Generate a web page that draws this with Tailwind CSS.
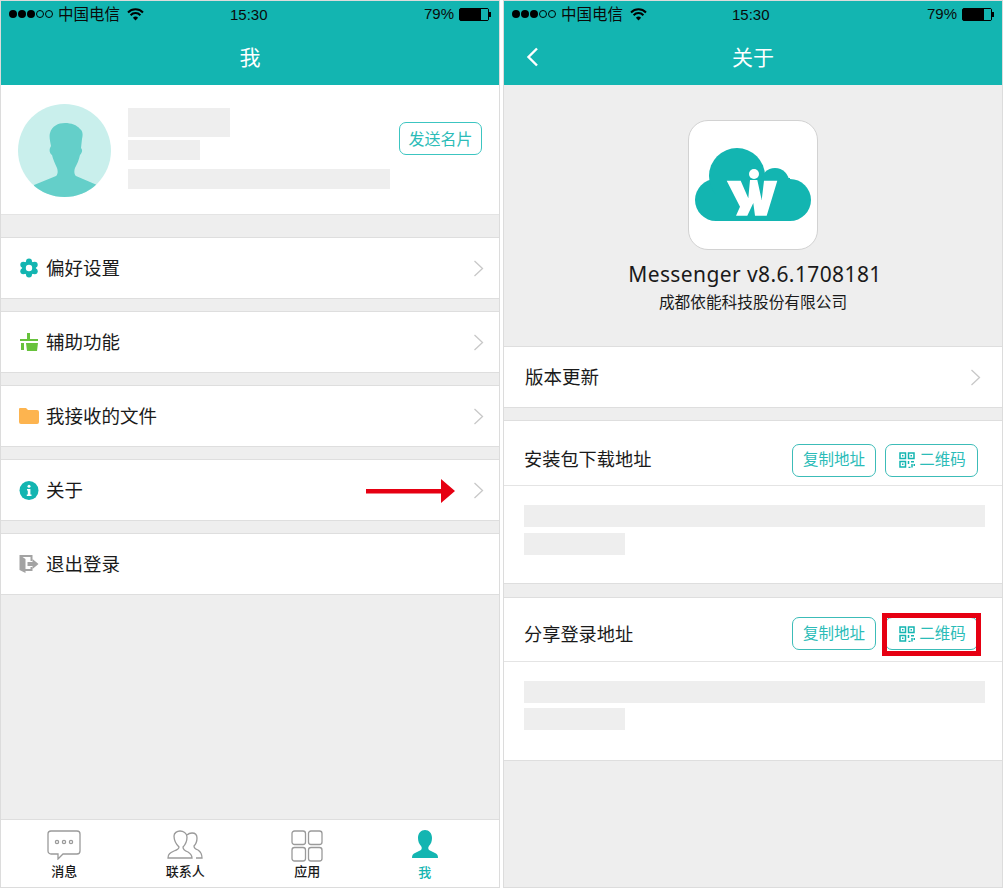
<!DOCTYPE html>
<html lang="zh-CN">
<head>
    <meta charset="UTF-8">
    <meta name="viewport" content="width=device-width, initial-scale=1.0">
    <title>Messenger</title>
    <script src="https://cdn.jsdelivr.net/npm/@tailwindcss/browser@4"></script>
</head>
<body class="bg-white font-['Noto_Sans','Noto_Sans_CJK_SC',sans-serif] text-[#1a1a1a]">
<div class="flex w-[1003px] h-[888px] overflow-hidden">

    <!-- left phone: me -->
    <div class="relative flex flex-col w-[500px] h-[888px] border border-[#dcdcdc] bg-[#eeeeee]">
        <div class="h-[84px] shrink-0 bg-[#13b5b1]">
            <div class="relative flex items-center h-[26px] pl-[8px] pr-[8px] font-['Liberation_Sans','Noto_Sans_CJK_SC',sans-serif] text-[15px] text-[#0a0a0a]">
                <div class="flex items-center gap-[1px]">
                    <span class="w-[8px] h-[8px] rounded-full bg-black"></span>
                    <span class="w-[8px] h-[8px] rounded-full bg-black"></span>
                    <span class="w-[8px] h-[8px] rounded-full bg-black"></span>
                    <span class="w-[8px] h-[8px] rounded-full border border-black"></span>
                    <span class="w-[8px] h-[8px] rounded-full border border-black"></span>
                </div>
                <span class="ml-[5px] font-['Noto_Sans_CJK_SC',sans-serif] text-[15.5px]">中国电信</span>
                <svg class="ml-[7px]" width="17" height="13" viewBox="0 0 17 13" fill="none" stroke="#000" stroke-width="2"><path d="M1 4.5a10.5 10.5 0 0 1 15 0"/><path d="M3.6 7.2a6.8 6.8 0 0 1 9.8 0"/><path d="M8.5 12.5l-2.6-2.8a3.7 3.7 0 0 1 5.2 0z" fill="#000" stroke="none"/></svg>
                <span class="absolute left-[229px] top-[3px] text-[15px]">15:30</span>
                <span class="ml-auto text-[15px]">79%</span>
                <div class="ml-[5px] flex items-center">
                    <div class="w-[30px] h-[13px] rounded-[2px] border border-black bg-black flex justify-end"><span class="w-[7px] h-[11px] bg-[#13b5b1]"></span></div>
                    <span class="w-[2px] h-[5px] bg-black"></span>
                </div>
            </div>
            <div class="h-[58px] pt-[3px] flex items-center justify-center text-white text-[21px]">我</div>
        </div>

        <div class="h-[130px] shrink-0 bg-white flex pl-[17px] pr-[17px] items-start border-b border-[#e4e4e4]">
            <svg class="mt-[19px] shrink-0" width="93" height="93" viewBox="0 0 93 93">
                <defs><clipPath id="av"><circle cx="46.5" cy="46.5" r="46.5"/></clipPath></defs>
                <circle cx="46.5" cy="46.5" r="46.5" fill="#c9efec"/>
                <path clip-path="url(#av)" fill="#64cfc9" d="M16 81l22-9c2-2 2-5 1-8-2-4-4-9-5-13-2-1-3-4-2-7l1-2c-1-5-2-10-1-13 2-7 8-10 15-10 6 0 12 2 15 6 3 2 3 6 2 10l-1 9c2 2 1 5-1 7-1 5-3 9-5 13-1 3-1 6 1 8l21 9v15H16z"/>
            </svg>
            <div class="ml-[17px] w-[262px] shrink-0 pt-[23px]">
                <div class="w-[102px] h-[29px] bg-[#eeeeee]"></div>
                <div class="mt-[3px] w-[72px] h-[20px] bg-[#eeeeee]"></div>
                <div class="mt-[9px] w-[262px] h-[20px] bg-[#eeeeee]"></div>
            </div>
            <div class="ml-auto mt-[37px] w-[83px] h-[33px] rounded-[7px] border border-[#3cc5c1] text-[#2bbcb8] text-[16px] flex items-center justify-center">发送名片</div>
        </div>

        <div class="mt-[22px] flex flex-col gap-[12px]">
            <div class="h-[62px] bg-white border-y border-[#dedede] flex items-center pl-[18px] pr-[15px]">
                <svg class="w-[20px] shrink-0" width="20" height="20" viewBox="0 0 20 20">
                    <g fill="#13b5b1"><circle cx="10" cy="3.5" r="3"/><circle cx="10" cy="16.5" r="3"/><circle cx="4.3" cy="6.7" r="3"/><circle cx="15.7" cy="6.7" r="3"/><circle cx="4.3" cy="13.3" r="3"/><circle cx="15.7" cy="13.3" r="3"/><circle cx="10" cy="10" r="7"/></g>
                    <circle cx="10" cy="10" r="3.2" fill="#fff"/>
                </svg>
                <span class="ml-[7px] text-[18.5px]">偏好设置</span>
                <svg class="ml-auto" width="11" height="17" viewBox="0 0 11 17" fill="none" stroke="#c8c8c8" stroke-width="1.3"><path d="M1.5 1l8 7.500-8 7.500"/></svg>
            </div>
            <div class="h-[62px] bg-white border-y border-[#dedede] flex items-center pl-[18px] pr-[15px]">
                <svg class="w-[20px] shrink-0" width="20" height="18" viewBox="0 0 20 18"><path fill="#67c23c" d="M8 0h3v6h8v2H1V6h7zM2 10h3v7H2zM7 10h12l-1 8H8z"/></svg>
                <span class="ml-[7px] text-[18.5px]">辅助功能</span>
                <svg class="ml-auto" width="11" height="17" viewBox="0 0 11 17" fill="none" stroke="#c8c8c8" stroke-width="1.3"><path d="M1.5 1l8 7.500-8 7.500"/></svg>
            </div>
            <div class="h-[62px] bg-white border-y border-[#dedede] flex items-center pl-[18px] pr-[15px]">
                <svg class="w-[20px] shrink-0" width="20" height="16" viewBox="0 0 20 16"><path fill="#fdb44f" d="M1 0h6l2 2h9a2 2 0 0 1 2 2v10a2 2 0 0 1-2 2H2a2 2 0 0 1-2-2V1a1 1 0 0 1 1-1z"/></svg>
                <span class="ml-[7px] text-[18.5px]">我接收的文件</span>
                <svg class="ml-auto" width="11" height="17" viewBox="0 0 11 17" fill="none" stroke="#c8c8c8" stroke-width="1.3"><path d="M1.5 1l8 7.500-8 7.500"/></svg>
            </div>
            <div class="h-[62px] bg-white border-y border-[#dedede] flex items-center pl-[18px] pr-[15px]">
                <svg class="w-[20px] shrink-0" width="19" height="19" viewBox="0 0 19 19"><circle cx="9.5" cy="9.5" r="9.5" fill="#13b5b1"/><circle cx="9.5" cy="5.3" r="1.5" fill="#fff"/><path fill="#fff" d="M7.5 8h3.400v5.500H12V15H7.300v-1.500h1V9.500h-.8z"/></svg>
                <span class="ml-[7px] text-[18.5px]">关于</span>
                <svg class="ml-auto" width="11" height="17" viewBox="0 0 11 17" fill="none" stroke="#c8c8c8" stroke-width="1.3"><path d="M1.5 1l8 7.500-8 7.500"/></svg>
            </div>
            <div class="h-[62px] bg-white border-y border-[#dedede] flex items-center pl-[18px] pr-[15px]">
                <svg class="w-[20px] shrink-0" width="19" height="18" viewBox="0 0 19 18"><path fill="#a3a3a3" d="M0 0h13v6h-2V2H5l-2 0 3 2v10h5v-2h2v4H6v2l-6-3z"/><path fill="#a3a3a3" d="M8 7h5V4l6 5-6 5v-3H8z"/></svg>
                <span class="ml-[7px] text-[18.5px]">退出登录</span>
            </div>
        </div>

        <!-- tab bar -->
        <div class="mt-auto h-[68px] bg-white border-t border-[#dedede] grid grid-cols-4 text-[13px] leading-[16px] font-medium">
            <div class="flex flex-col items-center pt-[10px] ml-[2px]">
                <svg width="34" height="30" viewBox="0 0 34 30" fill="none" stroke="#9a9a9a" stroke-width="1.3"><path d="M4 1h26a3 3 0 0 1 3 3v17a3 3 0 0 1-3 3H16l-5 5v-5H4a3 3 0 0 1-3-3V4a3 3 0 0 1 3-3z"/><circle cx="10" cy="12" r="1.6"/><circle cx="17" cy="12" r="1.6"/><circle cx="24" cy="12" r="1.6"/></svg>
                <span class="mt-[3px]">消息</span>
            </div>
            <div class="flex flex-col items-center pt-[10px] -ml-[5px]">
                <svg width="36" height="30" viewBox="0 0 36 30" fill="none" stroke="#9a9a9a" stroke-width="1.3"><path d="M1 28c0-4 2-5 6-7 3-1 5-2 5-4-3-3-5-7-5-11 0-3 3-5 6-5s7 2 7 6c0 4-2 8-4 10 0 3 2 4 5 5 3 2 4 3 4 6z"/><path d="M20 5c1-1 3-2 5-2 3 0 5 2 5 5 0 3-1 6-3 8 0 2 1 3 4 4 3 2 4 4 4 8h-6"/></svg>
                <span class="mt-[3px]">联系人</span>
            </div>
            <div class="flex flex-col items-center pt-[10px] -ml-[10px]">
                <svg width="32" height="32" viewBox="0 0 32 32" fill="none" stroke="#9a9a9a" stroke-width="1.3"><rect x="1" y="1" width="13.5" height="13.5" rx="2.5"/><rect x="17.5" y="1" width="13.5" height="13.5" rx="2.5"/><rect x="1" y="17.5" width="13.5" height="13.5" rx="2.5"/><rect x="17.5" y="17.5" width="13.5" height="13.5" rx="2.5"/></svg>
                <span class="mt-[1px]">应用</span>
            </div>
            <div class="flex flex-col items-center pt-[10px] -ml-[24px] text-[#13b5b1]">
                <svg width="26" height="28" viewBox="0 0 26 28"><path fill="#13b5b1" d="M0 28c0-3 1-4 3-5l6-3c1-1 1-3 0-4-2-2-3-5-3-8 0-5 3-8 7-8s7 3 7 8c0 3-1 6-3 8-1 1-1 3 0 4l6 3c2 1 3 2 3 5z"/></svg>
                <span class="mt-[6px]">我</span>
            </div>
        </div>

        <!-- red annotation arrow -->
        <svg class="absolute left-[365px] top-[478px]" width="90" height="24" viewBox="0 0 90 24"><path fill="#e60012" d="M0 10h75V0l14 12-14 12V14.500H0z"/></svg>
    </div>

    <div class="w-[3px] shrink-0"></div>

    <!-- right phone: about -->
    <div class="relative flex flex-col w-[500px] h-[888px] border border-[#dcdcdc] bg-[#eeeeee]">
        <div class="h-[84px] shrink-0 bg-[#13b5b1]">
            <div class="relative flex items-center h-[26px] pl-[8px] pr-[8px] font-['Liberation_Sans','Noto_Sans_CJK_SC',sans-serif] text-[15px] text-[#0a0a0a]">
                <div class="flex items-center gap-[1px]">
                    <span class="w-[8px] h-[8px] rounded-full bg-black"></span>
                    <span class="w-[8px] h-[8px] rounded-full bg-black"></span>
                    <span class="w-[8px] h-[8px] rounded-full bg-black"></span>
                    <span class="w-[8px] h-[8px] rounded-full border border-black"></span>
                    <span class="w-[8px] h-[8px] rounded-full border border-black"></span>
                </div>
                <span class="ml-[5px] font-['Noto_Sans_CJK_SC',sans-serif] text-[15.5px]">中国电信</span>
                <svg class="ml-[7px]" width="17" height="13" viewBox="0 0 17 13" fill="none" stroke="#000" stroke-width="2"><path d="M1 4.5a10.5 10.5 0 0 1 15 0"/><path d="M3.6 7.2a6.8 6.8 0 0 1 9.8 0"/><path d="M8.5 12.5l-2.6-2.8a3.7 3.7 0 0 1 5.2 0z" fill="#000" stroke="none"/></svg>
                <span class="absolute left-[228px] top-[3px] text-[15px]">15:30</span>
                <span class="ml-auto text-[15px]">79%</span>
                <div class="ml-[5px] flex items-center">
                    <div class="w-[30px] h-[13px] rounded-[2px] border border-black bg-black flex justify-end"><span class="w-[7px] h-[11px] bg-[#13b5b1]"></span></div>
                    <span class="w-[2px] h-[5px] bg-black"></span>
                </div>
            </div>
            <div class="relative h-[58px] pt-[3px] flex items-center justify-center text-white text-[21px]">
                <svg class="absolute left-[22px] top-[20px]" width="13" height="20" viewBox="0 0 13 20" fill="none" stroke="#fff" stroke-width="2.4"><path d="M11 1.500L2.500 10l8.500 8.500"/></svg>
                关于
            </div>
        </div>

        <div class="h-[261px] shrink-0 flex flex-col items-center pt-[35px]">
            <div class="w-[130px] h-[130px] rounded-[20px] bg-white border border-[#d2d2d2] flex items-center justify-center">
                <svg width="116" height="74" viewBox="0 0 116 74">
                    <g fill="#13b5b1">
                        <circle cx="21" cy="52" r="21"/>
                        <circle cx="42" cy="28" r="28"/>
                        <circle cx="80" cy="34" r="14"/>
                        <circle cx="95" cy="52" r="21"/>
                        <rect x="21" y="30" width="74" height="43"/>
                    </g>
                    <circle cx="59" cy="26" r="5" fill="#fff"/>
                    <path fill="#fff" d="M31.7 32.7H45.7L53.3 50.3L55 32H62.3L66.7 52L69 32.7H82.3L71.7 67.7H60L58.3 55L52.3 67.7H41L45 58.7z"/>
                </svg>
            </div>
            <div class="mt-[8px] ml-[4px] text-[21px] leading-[32px] tracking-[0.4px]">Messenger v8.6.1708181</div>
            <div class="text-[15.7px] leading-[24px]">成都依能科技股份有限公司</div>
        </div>

        <div class="h-[62px] shrink-0 bg-white border-y border-[#dedede] flex items-center pl-[21px] pr-[21px]">
            <span class="-mt-[1px] text-[18.5px]">版本更新</span>
            <svg class="ml-auto" width="11" height="17" viewBox="0 0 11 17" fill="none" stroke="#c8c8c8" stroke-width="1.3"><path d="M1.5 1l8 7.500-8 7.500"/></svg>
        </div>

        <div class="mt-[12px] h-[164px] shrink-0 bg-white border-y border-[#dedede]">
            <div class="h-[65px] pt-[14px] border-b border-[#e4e4e4] flex items-center pl-[20px] pr-[24px]">
                <span class="text-[18.2px]">安装包下载地址</span>
                <div class="ml-auto w-[84px] h-[33px] rounded-[7px] border border-[#3cbcb8] text-[#2bbcb8] text-[15.5px] flex items-center justify-center">复制地址</div>
                <div class="ml-[9px] w-[93px] h-[33px] pl-[2px] rounded-[7px] border border-[#3cbcb8] text-[#2bbcb8] text-[15.5px] flex items-center justify-center gap-[4px]">
                    <svg width="16" height="16" viewBox="0 0 16 16" fill="none" stroke="#13b5b1" stroke-width="1.5"><rect x="1" y="1" width="5.5" height="5.5"/><rect x="9.5" y="1" width="5.5" height="5.5"/><rect x="1" y="9.5" width="5.5" height="5.5"/><path d="M3.750 3v1.500M12.250 3v1.500M3.750 11.500V13M9.500 9v3M12 9.750h3M9.500 15.500h2M13 12v3.500M15.250 12v2"/></svg>
                    二维码
                </div>
            </div>
            <div class="pl-[20px] pt-[19px]">
                <div class="w-[461px] h-[22px] bg-[#eeeeee]"></div>
                <div class="mt-[6px] w-[101px] h-[22px] bg-[#eeeeee]"></div>
            </div>
        </div>

        <div class="mt-[13px] h-[164px] shrink-0 bg-white border-y border-[#dedede]">
            <div class="h-[64px] pt-[8px] border-b border-[#e4e4e4] flex items-center pl-[20px] pr-[24px]">
                <span class="mt-[3px] text-[18.2px]">分享登录地址</span>
                <div class="ml-auto w-[84px] h-[33px] rounded-[7px] border border-[#3cbcb8] text-[#2bbcb8] text-[15.5px] flex items-center justify-center">复制地址</div>
                <div class="ml-[9px] w-[93px] h-[33px] pl-[2px] rounded-[7px] border border-[#3cbcb8] text-[#2bbcb8] text-[15.5px] flex items-center justify-center gap-[4px]">
                    <svg width="16" height="16" viewBox="0 0 16 16" fill="none" stroke="#13b5b1" stroke-width="1.5"><rect x="1" y="1" width="5.5" height="5.5"/><rect x="9.5" y="1" width="5.5" height="5.5"/><rect x="1" y="9.5" width="5.5" height="5.5"/><path d="M3.750 3v1.500M12.250 3v1.500M3.750 11.500V13M9.500 9v3M12 9.750h3M9.500 15.500h2M13 12v3.500M15.250 12v2"/></svg>
                    二维码
                </div>
            </div>
            <div class="pl-[20px] pt-[19px]">
                <div class="w-[461px] h-[22px] bg-[#eeeeee]"></div>
                <div class="mt-[5px] w-[101px] h-[22px] bg-[#eeeeee]"></div>
            </div>
        </div>

        <!-- red annotation box -->
        <div class="absolute left-[378px] top-[612px] w-[99px] h-[43px] border-[5px] border-[#e60012]"></div>
    </div>
</div>
</body>
</html>
